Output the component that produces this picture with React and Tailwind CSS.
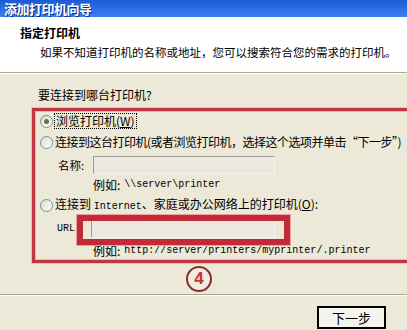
import React from 'react';

const cjk = "font-['SimSun','Noto_Sans_CJK_SC',sans-serif]";
const mono = "font-['Liberation_Mono',monospace]";

const Radio = ({ checked }) => (
    <span className="relative w-[13px] h-[13px] shrink-0 rounded-full border border-[#7f8c9c] bg-gradient-to-br from-[#dcdad0] to-white flex items-center justify-center">
        {checked && <span className="w-[5px] h-[5px] rounded-full bg-[#4f7a46]" />}
    </span>
);

const Field = ({ className }) => (
    <div className={`h-[18px] border border-[#9d9b91] border-b-[#f4f3ee] border-r-[#f4f3ee] bg-[#ebe9df] ${className}`} />
);

export default function App() {
    return (
        <div className={`w-[407px] h-[330px] overflow-hidden bg-[#ECE9D8] text-black flex flex-col ${cjk}`}>
            {/* title bar */}
            <div className="h-[17px] shrink-0 bg-gradient-to-b from-[#1d5bd6] to-[#3a7ff0] flex items-end pl-[4px] overflow-hidden">
                <span className="text-white font-bold text-[13px] leading-[13px] mb-[2px] tracking-[-0.5px] [text-shadow:1px_1px_0_#0a2a80]">添加打印机向导</span>
            </div>

            {/* header */}
            <div className="h-[55px] shrink-0 bg-white pl-[20px] pt-[10px]">
                <div className="font-bold text-[12px] leading-[12px]">指定打印机</div>
                <div className="pl-[20px] mt-[7px] text-[11.5px] leading-[12px] whitespace-nowrap">如果不知道打印机的名称或地址，您可以搜索符合您的需求的打印机。</div>
            </div>
            <div className="h-px bg-[#aca899] shrink-0" />
            <div className="h-px bg-white shrink-0" />

            {/* body */}
            <div className="pt-[15px] text-[12px] leading-[12px]">
                <div className="pl-[38px] h-[12px]">要连接到哪台打印机?</div>

                <div className="mt-[7px] ml-[32px] mr-[-30px] border-[3px] border-[#c2343f] shadow-[0_0_0_1px_#f3bcbc,inset_0_0_0_1px_#f0b4b4] pt-[2px] pb-[4px]">
                    <div className="h-[16px] flex items-center pl-[5px] gap-[2px]">
                        <Radio checked />
                        <span className="px-[1px] py-[1px] outline outline-1 outline-dotted outline-black whitespace-nowrap">浏览打印机(<span className="underline">W</span>)</span>
                    </div>
                    <div className="mt-[5px] h-[16px] flex items-center pl-[5px] gap-[2px]">
                        <Radio />
                        <span className="whitespace-nowrap tracking-[-0.5px]">连接到这台打印机(或者浏览打印机，选择这个选项并单击“下一步”)</span>
                    </div>
                    <div className="mt-[6px] h-[18px] flex items-center pl-[23px]">
                        <span className="w-[35px] text-[11.5px]">名称:</span>
                        <Field className="w-[182px]" />
                    </div>
                    <div className="mt-[5px] h-[12px] flex items-center pl-[58px] whitespace-nowrap">
                        例如: <span className={`${mono} text-[10px] ml-[4px]`}>\\server\printer</span>
                    </div>
                    <div className="mt-[6px] h-[16px] flex items-center pl-[5px] gap-[2px]">
                        <Radio />
                        <span className="whitespace-nowrap">连接到 <span className={`${mono} text-[10px]`}>Internet</span>、家庭或办公网络上的打印机(<span className="underline">O</span>):</span>
                    </div>
                    <div className="relative mt-[7px] h-[18px] flex items-center pl-[22px]">
                        <span className={`${mono} text-[10px] w-[34px]`}>URL:</span>
                        <Field className="w-[184px]" />
                        <div className="absolute left-[42px] top-[-5px] w-[213px] h-[30px] border-[6px] border-[#c32a37] shadow-[0_0_0_1px_#eaa0a4]" />
                    </div>
                    <div className="mt-[8px] h-[10px] flex items-center pl-[58px] whitespace-nowrap">
                        例如: <span className={`${mono} text-[10px] ml-[4px]`}>http://server/printers/myprinter/.printer</span>
                    </div>
                </div>

                <div className="h-[31px] flex items-center pl-[186px]">
                    <div className="w-[26px] h-[26px] rounded-full border-2 border-[#8a2c2c] bg-[#f1ece0] flex items-center justify-center">
                        <span className="font-['Liberation_Sans',sans-serif] font-bold text-[17px] leading-none text-[#c4333a]">4</span>
                    </div>
                </div>
                <div className="h-px bg-[#aca899]" />
                <div className="h-px bg-white" />
                <div className="pt-[10px] pl-[317px]">
                    <div className="w-[69px] h-[23px] border-2 border-black bg-[#f4f3ee] flex items-center justify-center text-[13px] leading-[13px]">下一步</div>
                </div>
            </div>
        </div>
    );
}
